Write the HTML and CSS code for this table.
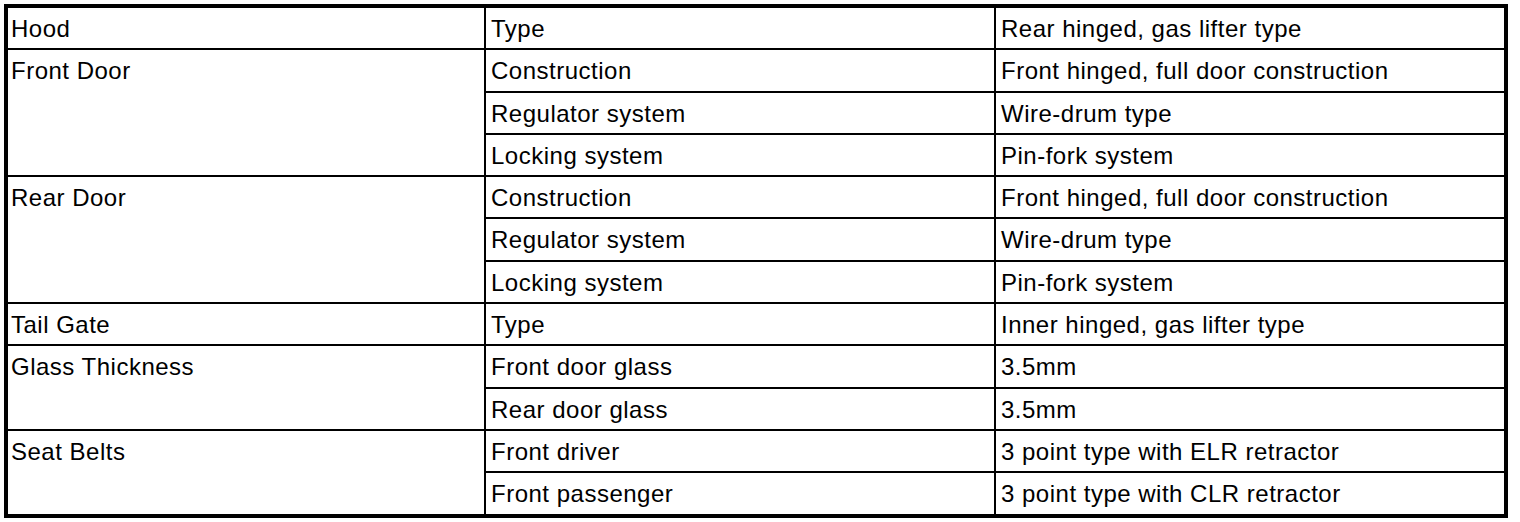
FILE: index.html
```html
<!DOCTYPE html>
<html>
<head>
<meta charset="utf-8">
<link rel="stylesheet" href="styles.css">
</head>
<body>
<div class="spec">
  <div class="cell c1">Hood</div>
  <div class="cell c2">Type</div>
  <div class="cell c3">Rear hinged, gas lifter type</div>

  <div class="cell c1 span3">Front Door</div>
  <div class="cell c2">Construction</div>
  <div class="cell c3">Front hinged, full door construction</div>
  <div class="cell c2">Regulator system</div>
  <div class="cell c3">Wire-drum type</div>
  <div class="cell c2">Locking system</div>
  <div class="cell c3">Pin-fork system</div>

  <div class="cell c1 span3">Rear Door</div>
  <div class="cell c2">Construction</div>
  <div class="cell c3">Front hinged, full door construction</div>
  <div class="cell c2">Regulator system</div>
  <div class="cell c3">Wire-drum type</div>
  <div class="cell c2">Locking system</div>
  <div class="cell c3">Pin-fork system</div>

  <div class="cell c1">Tail Gate</div>
  <div class="cell c2">Type</div>
  <div class="cell c3">Inner hinged, gas lifter type</div>

  <div class="cell c1 span2">Glass Thickness</div>
  <div class="cell c2">Front door glass</div>
  <div class="cell c3">3.5mm</div>
  <div class="cell c2">Rear door glass</div>
  <div class="cell c3">3.5mm</div>

  <div class="cell c1 span2">Seat Belts</div>
  <div class="cell c2">Front driver</div>
  <div class="cell c3">3 point type with ELR retractor</div>
  <div class="cell c2">Front passenger</div>
  <div class="cell c3">3 point type with CLR retractor</div>
</div>
</body>
</html>
```

FILE: styles.css
```css
html, body {
  margin: 0;
  background: #fff;
}
body {
  padding: 4px;
}
.spec {
  width: 1496px;
  border: 4px solid #000;
  background: #000;
  display: grid;
  grid-template-columns: 476px 508px 508px;
  grid-auto-rows: 40.3px;
  gap: 2px;
  font-family: "Liberation Sans", Arial, sans-serif;
  font-size: 24px;
  letter-spacing: 0.5px;
  color: #000;
}
.cell {
  background: #fff;
  line-height: 41px;
  white-space: nowrap;
  padding-left: 5px;
}
.c1 {
  grid-column: 1;
  padding-left: 3px;
}
.c2 { grid-column: 2; }
.c3 { grid-column: 3; }
.span2 { grid-row: span 2; }
.span3 { grid-row: span 3; }
```
